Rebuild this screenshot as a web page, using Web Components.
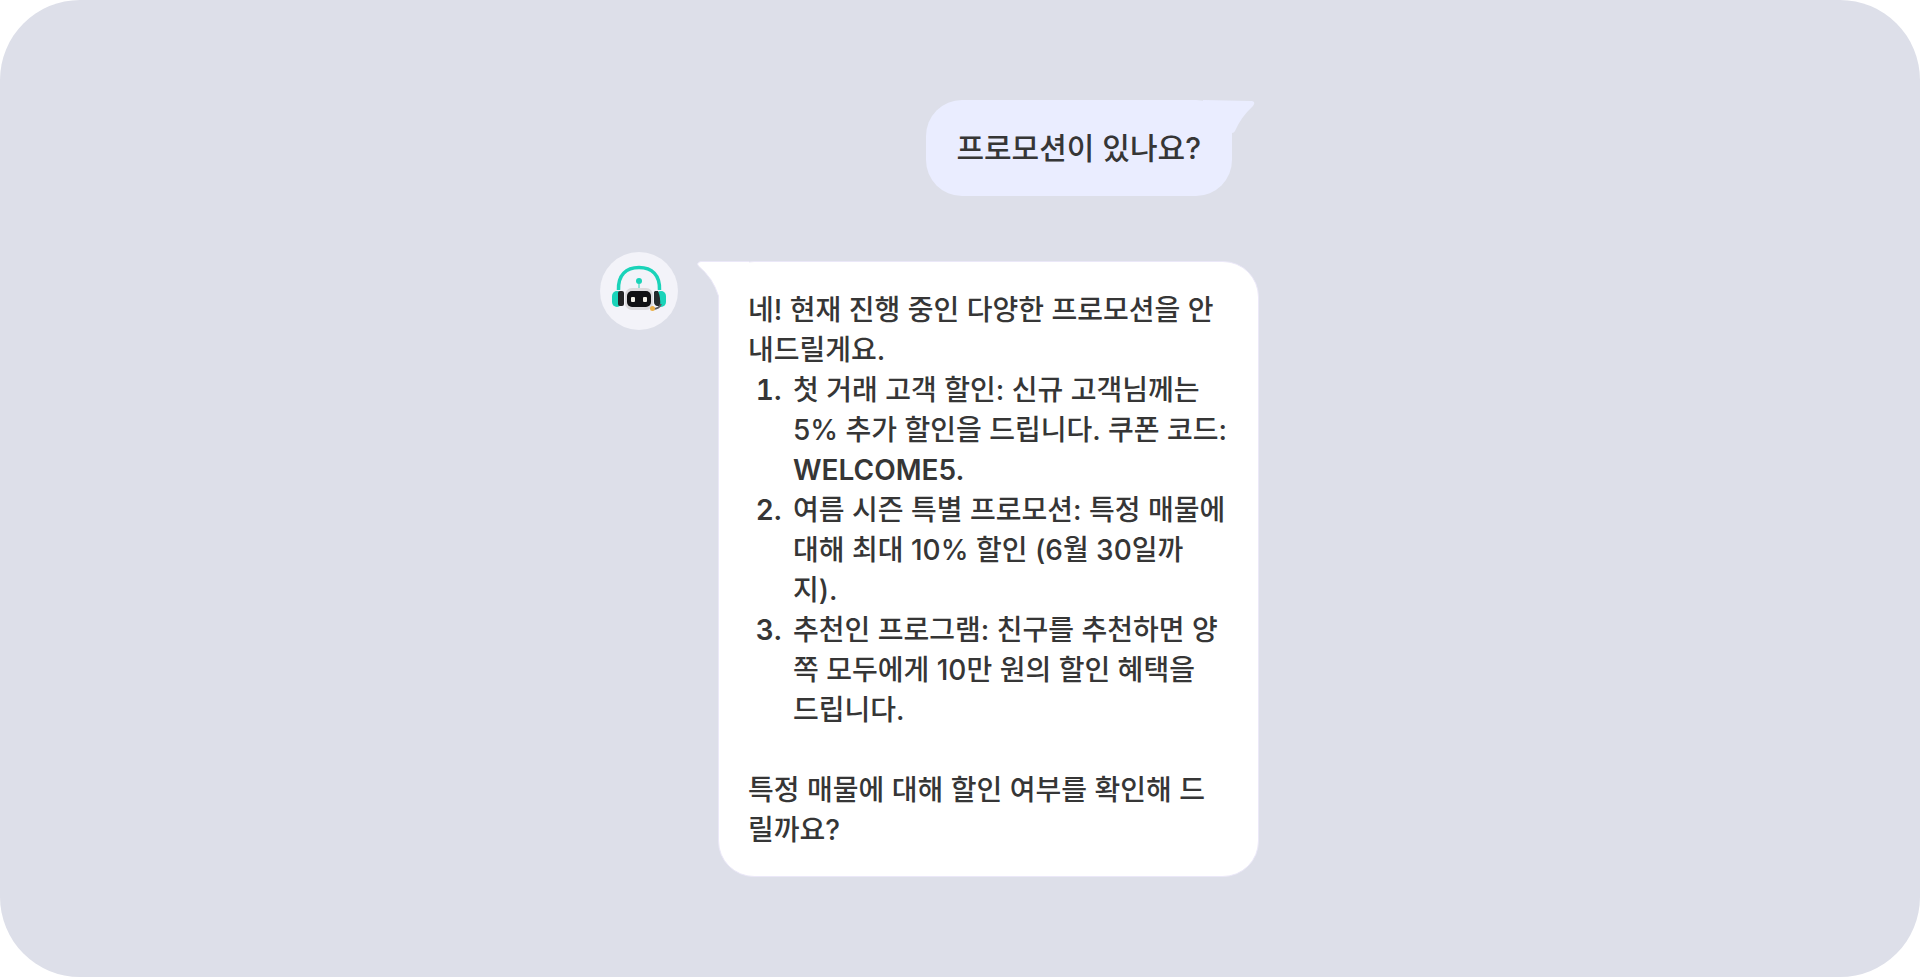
<!DOCTYPE html>
<html lang="ko">
<head>
<meta charset="utf-8">
<meta name="viewport" content="width=device-width, initial-scale=1">
<title>프로모션 안내</title>
<style>
body { margin: 0; background: #fff; font-family: Inter, "Noto Sans CJK KR", sans-serif; color: #363636; }
p, ol { margin: 0; }
ol { padding-left: 41px; }
li { padding-left: 4px; }
li::marker { font-weight: 600; }
.follow-up { margin-top: 40px; }
.code { font-weight: 600; }
</style>
</head>
<body>
<chat-stage>
  <user-message><p>프로모션이 있나요?</p></user-message>
  <bot-message>
    <p>네! 현재 진행 중인 다양한 프로모션을 안<br>내드릴게요.</p>
    <ol>
      <li>첫 거래 고객 할인: 신규 고객님께는<br>5% 추가 할인을 드립니다. 쿠폰 코드:<br><span class="code">WELCOME5.</span></li>
      <li>여름 시즌 특별 프로모션: 특정 매물에<br>대해 최대 10% 할인 (6월 30일까<br>지).</li>
      <li>추천인 프로그램: 친구를 추천하면 양<br>쪽 모두에게 10만 원의 할인 혜택을<br>드립니다.</li>
    </ol>
    <p class="follow-up">특정 매물에 대해 할인 여부를 확인해 드<br>릴까요?</p>
  </bot-message>
</chat-stage>
<script>
const define = (name, html) => customElements.define(name, class extends HTMLElement {
  constructor() {
    super();
    this.attachShadow({ mode: "open" }).innerHTML = html;
  }
});

define("chat-stage", `
<style>
:host { display: block; box-sizing: border-box; min-height: 100vh; padding: 100px 24px; background: #dddfe9; border-radius: 80px; }
main { display: flex; flex-direction: column; gap: 56px; max-width: 720px; margin: 0 auto; }
</style>
<main><slot></slot></main>`);

define("user-message", `
<style>
:host { display: flex; justify-content: flex-end; padding-right: 88px; }
.bubble { position: relative; padding: 28px 31px 28px 30px; border-radius: 36px; background: #eaedff; font-size: 30px; line-height: 40px; font-weight: 500; }
svg { position: absolute; top: 0; right: -23px; }
</style>
<div class="bubble">
  <slot></slot>
  <svg width="60" height="40" viewBox="0 0 60 40" aria-hidden="true"><path fill="#eaedff" d="M8 0 L57 1 Q61 2 58 6 Q46 17 40 31 Q39 33 37 33 V40 H8 Z"/></svg>
</div>`);

define("bot-message", `
<style>
:host { display: flex; align-items: flex-start; gap: 40px; }
bot-avatar { flex: none; }
.bubble { position: relative; box-sizing: border-box; width: 541px; min-width: 0; margin-top: 9px; padding: 28px 16px 26px 29px; border: 1px solid #ebe8f8; border-radius: 36px; background: #fff; font-size: 28px; line-height: 40px; font-weight: 500; }
svg { position: absolute; top: -1px; left: -22px; }
</style>
<bot-avatar></bot-avatar>
<div class="bubble">
  <svg width="60" height="40" viewBox="0 0 60 40" aria-hidden="true"><path fill="#fff" stroke="#ebe8f8" d="M52 .5 H4 Q-1 1.500 1.500 5 Q16 17 21.500 35"/><path fill="#fff" d="M20 1 H52 V40 H22 V34 Z"/></svg>
  <slot></slot>
</div>`);

define("bot-avatar", `
<style>
:host { display: block; width: 78px; height: 78px; }
svg { display: block; width: 100%; height: 100%; }
</style>
<svg viewBox="0 0 78 78" role="img" aria-label="챗봇">
  <circle cx="39" cy="39" r="39" fill="#f3f3f9"/>
  <path d="M18.500 38C18 23 26 15.500 39 15.500S60 23 59.500 38" fill="none" stroke="#1ad3b9" stroke-width="3.500"/>
  <circle cx="39" cy="29" r="3" fill="#1ad3b9"/>
  <path d="M39 32V36" stroke="#8de3d6" stroke-width="2"/>
  <rect x="25" y="36" width="28" height="22" rx="7" fill="#dcdadd"/>
  <rect x="12" y="39" width="10" height="16" rx="5" fill="#1ad3b9"/>
  <rect x="56" y="39" width="10" height="16" rx="5" fill="#1ad3b9"/>
  <rect x="18" y="39" width="6" height="15" rx="2" fill="#252527"/>
  <path d="M55 39H58Q61 46 60 54H57Q54 53 54 50V40Z" fill="#252b2d"/>
  <rect x="27" y="39" width="24" height="16" rx="5" fill="#111113"/>
  <rect x="31" y="45" width="4" height="5" rx="1" fill="#f4f1e8"/>
  <rect x="43" y="45" width="4" height="5" rx="1" fill="#f4f1e8"/>
  <path d="M53 57Q59 57 61 52" fill="none" stroke="#5b5b60" stroke-width="2"/>
  <circle cx="52.500" cy="56.500" r="2.500" fill="#eab04a"/>
</svg>`);
</script>
</body>
</html>
